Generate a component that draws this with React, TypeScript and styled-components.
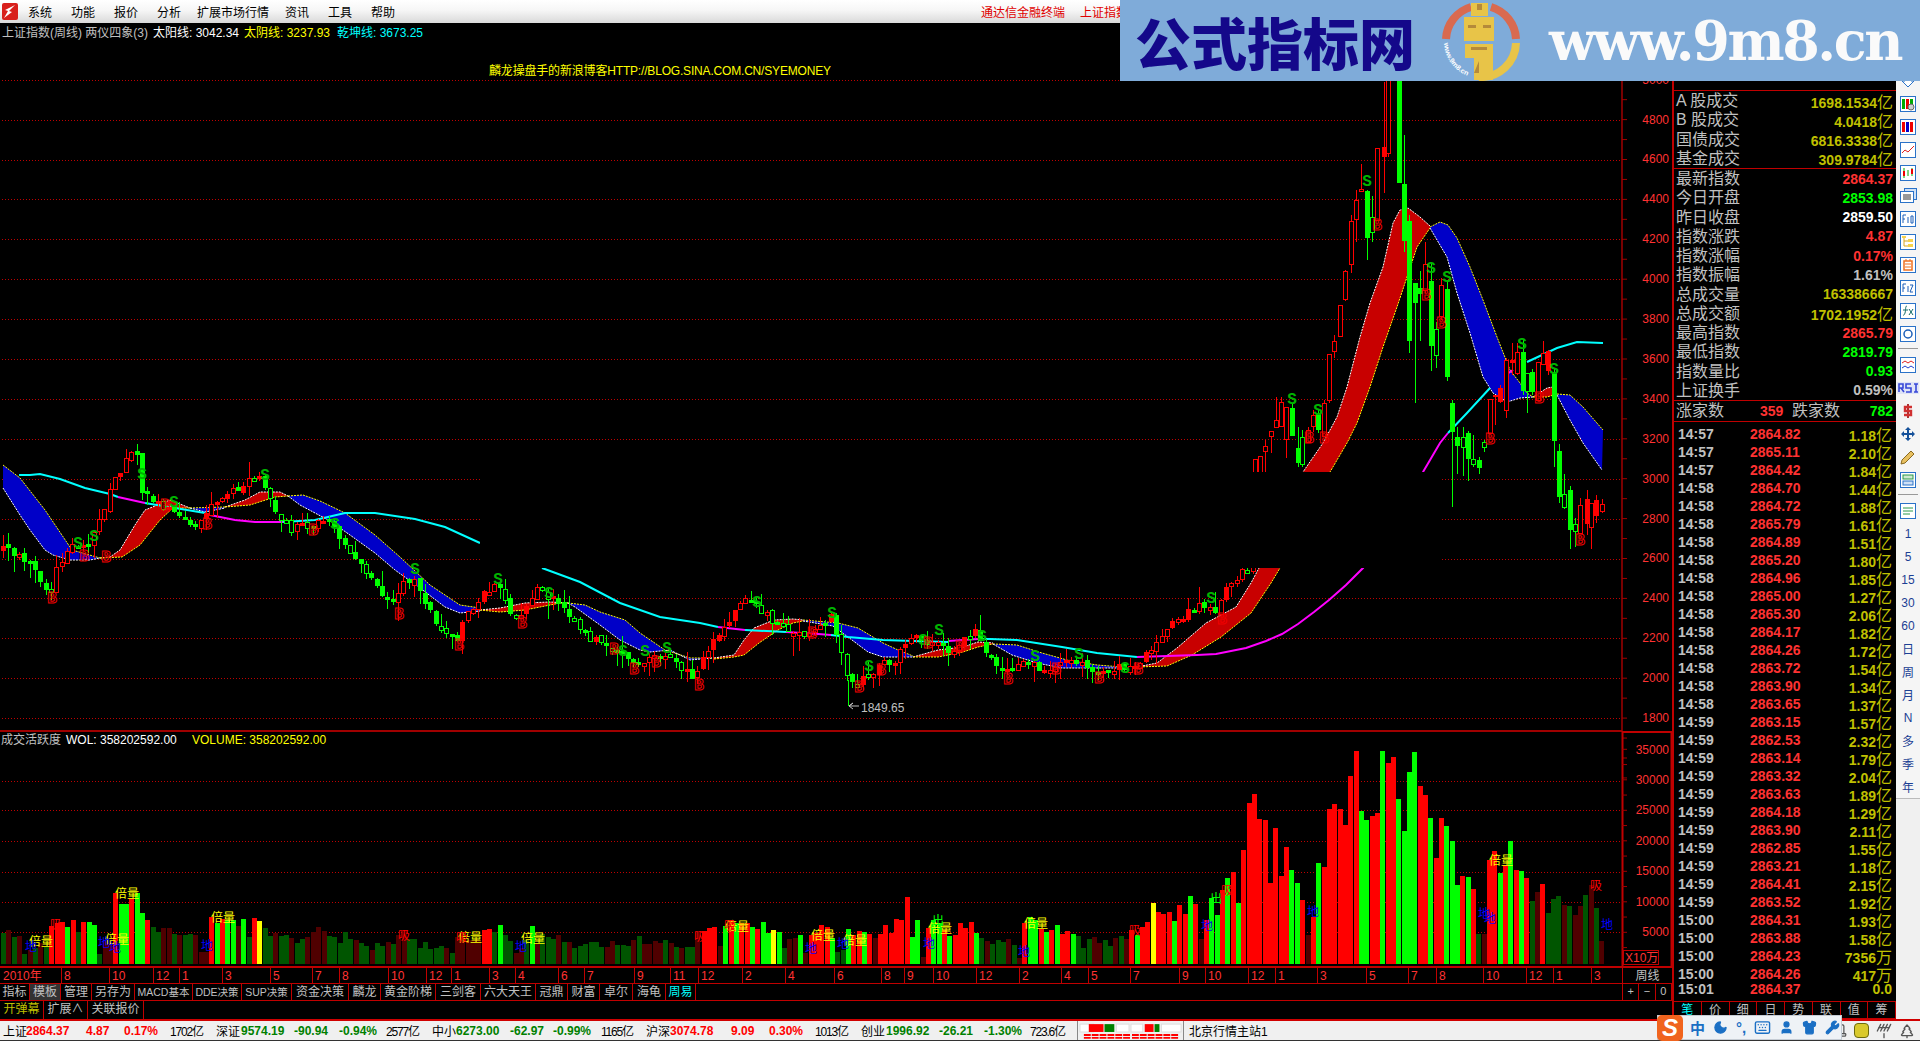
import { createGlobalStyle } from "styled-components";
import styled from "styled-components";
import { Moon, Keyboard, Shirt, Wrench, User, ScrollText, Antenna, TreePine } from "lucide-react";

const FONT = `"Liberation Sans", "Noto Sans CJK SC", sans-serif`;
const RED = "#ff3232";
const LINE = "#c00000";
const OLIVE = "#c0c000";
const GREY = "#c0c0c0";

const GlobalStyle = createGlobalStyle`
    html, body { margin: 0; padding: 0; background: #000; overflow: hidden; }
    * { box-sizing: border-box; }
`;

const Page = styled.div`
    position: relative;
    width: 1920px;
    height: 1041px;
    display: flex;
    flex-direction: column;
    background: #000;
    font-family: ${FONT};
    font-size: 12px;
    overflow: hidden;
`;

/* ---------- menu ---------- */

const MenuBar = styled.div`
    height: 23px;
    display: flex;
    align-items: center;
    background: linear-gradient(#ffffff, #f6f6f6 45%, #d9d9d9);
    color: #000;
`;

const AppLogo = styled.svg`
    width: 16px;
    height: 17px;
    margin: 0 10px 0 2px;
`;

const MenuItem = styled.div<{ $w: number }>`
    width: ${(p) => p.$w}px;
    white-space: nowrap;
`;

const MenuNote = styled.div<{ $left: number }>`
    margin-left: ${(p) => p.$left}px;
    color: #e00000;
    white-space: nowrap;
`;

/* ---------- layout ---------- */

const Main = styled.div`
    display: flex;
    height: 996px;
`;

const LeftCol = styled.div`
    width: 1672px;
    display: flex;
    flex-direction: column;
`;

const ChartSvg = styled.svg`
    display: block;
    width: 1672px;
    height: 945px;
`;

const BottomRow = styled.div`
    display: flex;
    flex: 1;
`;

const BottomLeft = styled.div`
    width: 1622px;
    display: flex;
    flex-direction: column;
`;

const TimeAxis = styled.svg`
    display: block;
    width: 1622px;
    height: 15px;
    flex: none;
`;

const TabRow = styled.div<{ $h: number }>`
    display: flex;
    height: ${(p) => p.$h}px;
    border-top: 1px solid ${LINE};
`;

const Tab = styled.div<{ $w: number; $c?: string; $active?: boolean; $small?: boolean }>`
    width: ${(p) => p.$w}px;
    border-right: 1px solid ${LINE};
    color: ${(p) => p.$c || GREY};
    background: ${(p) => (p.$active ? "#333" : "transparent")};
    font-size: ${(p) => (p.$small ? "10.5px" : "12px")};
    text-align: center;
    line-height: 16px;
    white-space: nowrap;
    overflow: hidden;
`;

const AxisFoot = styled.div`
    width: 50px;
    display: flex;
    flex-direction: column;
    color: ${GREY};
`;

const CycleCell = styled.div`
    height: 16px;
    line-height: 16px;
    text-align: center;
    font-size: 12px;
    border-bottom: 1px solid ${LINE};
    border-left: 1px solid ${LINE};
`;

const ZoomRow = styled.div`
    display: flex;
    height: 17px;
    border-bottom: 1px solid ${LINE};
    border-left: 1px solid ${LINE};
`;

const ZoomCell = styled.div`
    flex: 1;
    text-align: center;
    line-height: 15px;
    font-size: 11px;
    border-right: 1px solid ${LINE};
`;

/* ---------- right panel ---------- */

const Panel = styled.div`
    width: 224px;
    display: flex;
    flex-direction: column;
    border-left: 2px solid ${LINE};
    color: ${GREY};
`;

const PanelHead = styled.div`
    height: 68px;
    display: flex;
    align-items: flex-end;
    gap: 3px;
    padding: 0 0 9px 2px;
    border-bottom: 1px solid ${LINE};
`;

const HeadBar = styled.div<{ $w: number }>`
    width: ${(p) => p.$w}px;
    height: 2px;
    background: #e05050;
`;

const Section = styled.div`
    border-bottom: 1px solid ${LINE};
`;

const StatRow = styled.div`
    height: 19.25px;
    display: flex;
    align-items: center;
    justify-content: space-between;
    padding: 0 3px 0 2px;
`;

const StatLabel = styled.span`
    font-size: 16px;
    line-height: 19px;
    white-space: nowrap;
`;

const StatValue = styled.span<{ $c: string }>`
    color: ${(p) => p.$c};
    font-size: 14px;
    font-weight: 700;
    white-space: nowrap;
`;

const Unit = styled.span`
    font-size: 16px;
    font-weight: 400;
`;

const BreadthRow = styled.div`
    height: 21px;
    display: grid;
    grid-template-columns: 84px 32px 1fr auto;
    align-items: center;
    padding: 0 3px 0 2px;
    border-bottom: 1px solid ${LINE};
`;

const TradeList = styled.div`
    height: 580px;
`;

const TradeRow = styled.div`
    height: 18px;
    display: grid;
    grid-template-columns: 72px 1fr auto;
    align-items: center;
    padding: 0 4px 0 4px;
    font-size: 14px;
    font-weight: 700;
    white-space: nowrap;
`;

const TradeTime = styled.span`
    color: ${GREY};
`;

const TradePrice = styled.span`
    color: ${RED};
`;

const TradeVol = styled.span`
    color: ${OLIVE};
`;

const PanelTabs = styled.div`
    display: flex;
    height: 18px;
    border-top: 1px solid ${LINE};
    border-bottom: 1px solid ${LINE};
`;

const PanelTab = styled.div<{ $on?: boolean }>`
    flex: 1;
    text-align: center;
    line-height: 16px;
    font-size: 12px;
    color: ${(p) => (p.$on ? "#00ffff" : GREY)};
    border-right: 1px solid ${LINE};
`;

/* ---------- toolbar ---------- */

const Toolbar = styled.div`
    width: 24px;
    background: #f0f0f0;
`;

const ToolList = styled.div`
    height: 776px;
    padding-top: 46px;
    display: flex;
    flex-direction: column;
    background: #f5f5f5;
    border-bottom: 1px solid #bbb;
`;

const ToolItem = styled.div`
    height: 23px;
    flex: none;
    display: flex;
    align-items: center;
    justify-content: center;
    color: #1c3f94;
    font-size: 12px;
`;

const ToolSep = styled.div`
    height: 8px;
    flex: none;
    margin: 0 2px;
    &::after {
        content: "";
        display: block;
        height: 1px;
        margin-top: 3px;
        background: #999;
    }
`;

/* ---------- status bar ---------- */

const StatusBar = styled.div`
    height: 22px;
    display: flex;
    align-items: center;
    padding-left: 3px;
    background: #f0f0f0;
    border-top: 2px solid #d00000;
    border-bottom: 1px solid #333;
    color: #000;
`;

const Quote = styled.span<{ $w: number; $c?: string; $thin?: boolean }>`
    width: ${(p) => p.$w}px;
    flex: none;
    color: ${(p) => p.$c || "#000"};
    font-weight: ${(p) => (p.$c ? 700 : 400)};
    letter-spacing: ${(p) => (p.$thin ? "-1.2px" : "0")};
    white-space: nowrap;
`;

const MiniGauge = styled.svg`
    width: 107px;
    height: 19px;
    flex: none;
    border-left: 1px solid #888;
    border-right: 1px solid #888;
`;

const Station = styled.span`
    margin-left: 5px;
    white-space: nowrap;
`;

const Tray = styled.div`
    margin-left: auto;
    display: flex;
    align-items: center;
    gap: 7px;
    padding-right: 5px;
    color: #555;
`;

const CoinDot = styled.div`
    width: 15px;
    height: 15px;
    border-radius: 4px;
    background: #d9c92c;
    border: 1px solid #6c6a10;
`;

/* ---------- overlays ---------- */

const Banner = styled.div`
    position: absolute;
    left: 1120px;
    top: 0;
    width: 800px;
    height: 81px;
    display: flex;
    align-items: center;
    background: #7fabd9;
`;

const BannerTitle = styled.div`
    width: 321px;
    padding-left: 15px;
    color: #14088a;
    font-family: "Noto Sans CJK SC", sans-serif;
    font-size: 56px;
    font-weight: 900;
    line-height: 81px;
    white-space: nowrap;
`;

const BannerLogo = styled.svg`
    width: 80px;
    height: 80px;
    flex: none;
`;

const BannerUrl = styled.div`
    margin-left: 28px;
    color: #fafafa;
    font-family: "DejaVu Serif", serif;
    font-size: 54px;
    font-weight: 700;
    letter-spacing: -2.4px;
    white-space: nowrap;
`;

const ImeBar = styled.div`
    position: absolute;
    left: 1657px;
    top: 1015px;
    width: 185px;
    height: 25px;
    display: flex;
    align-items: center;
    gap: 8px;
    padding-left: 32px;
    background: #eef2f6;
    border: 1px solid #c5ccd4;
    color: #1a6fc4;
`;

const ImeLogo = styled.div`
    position: absolute;
    left: -1px;
    top: -1px;
    width: 26px;
    height: 26px;
    border-radius: 5px;
    background: #f0641e;
    color: #fff;
    font-size: 24px;
    font-weight: 700;
    font-style: italic;
    line-height: 26px;
    text-align: center;
`;

const ImeText = styled.span`
    font-size: 15px;
    font-weight: 700;
`;

/* ---------- svg text ---------- */

const Legend = styled.text<{ $c: string }>`
    fill: ${(p) => p.$c};
    font-family: ${FONT};
    font-size: 12px;
`;

const AxisNum = styled.text`
    fill: ${RED};
    font-family: ${FONT};
    font-size: 12px;
    text-anchor: end;
`;

const TimeLabel = styled.text`
    fill: ${RED};
    font-family: ${FONT};
    font-size: 12px;
`;

const Signal = styled.text<{ $c: string }>`
    fill: ${(p) => (p.$c === "S" ? "#00b400" : "none")};
    stroke: ${(p) => (p.$c === "S" ? "none" : "#f00000")};
    stroke-width: 1;
    font-family: "Liberation Mono", monospace;
    font-size: 16px;
    font-weight: 700;
    text-anchor: middle;
`;

const VolTag = styled.text<{ $c: string }>`
    fill: ${(p) => p.$c};
    font-family: "Noto Sans CJK SC", sans-serif;
    font-size: 12px;
    text-anchor: middle;
`;

/* ---------- chart data ---------- */

type Pt = [number, number];

const pricePath: Pt[] = [
    [3, 550], [20, 555], [35, 570], [45, 585], [50, 592], [55, 565], [75, 545], [85, 550], [95, 530], [115, 480], [130, 450],
    [138, 460], [142, 490], [160, 505], [175, 508], [185, 520], [195, 530], [205, 515], [215, 500], [235, 490], [250, 478],
    [262, 472], [265, 490], [275, 510], [290, 530], [310, 525], [330, 520], [340, 543], [357, 563], [370, 575], [382, 598],
    [395, 600], [400, 590], [405, 577], [415, 583], [425, 600], [437, 625], [447, 635], [457, 640], [465, 615], [475, 610],
    [485, 590], [497, 585], [510, 615], [522, 617], [530, 597], [537, 590], [550, 597], [565, 613], [582, 630], [592, 638],
    [605, 648], [615, 648], [632, 665], [645, 663], [652, 655], [670, 660], [682, 668], [694, 680], [705, 653], [715, 637],
    [735, 613], [746, 593], [754, 603], [769, 617], [788, 630], [801, 637], [818, 623], [831, 617], [843, 653], [848, 683],
    [860, 680], [878, 667], [898, 657], [908, 637], [923, 640], [938, 643], [950, 653], [963, 640], [975, 630], [983, 650],
    [997, 668], [1007, 673], [1025, 660], [1037, 667], [1047, 673], [1067, 657], [1080, 663], [1090, 673], [1117, 667],
    [1137, 667], [1149, 653], [1157, 637], [1179, 617], [1201, 605], [1216, 610], [1226, 590], [1241, 573], [1255, 560],
];

// [zoomX, bodyTop, bodyBottom, high, low, kind] r solid red, R hollow red, g solid green, G hollow green
type Raw = [number, number, number, number, number, string];
const rightCandles: Raw[] = [
    [44, 1197, 1240, 1197, 1240, "R"], [60, 1187, 1240, 1187, 1240, "R"], [76, 1158, 1172, 1140, 1240, "R"], [92, 1112, 1126, 1112, 1178, "R"],
    [108, 1080, 1100, 1012, 1100, "R"], [124, 1027, 1100, 1010, 1100, "R"], [139, 1042, 1138, 1042, 1195, "R"], [157, 1044, 1128, 1030, 1128, "g"],
    [173, 1165, 1208, 1100, 1222, "g"], [187, 1132, 1213, 1110, 1222, "G"], [205, 1110, 1145, 1100, 1145, "R"], [220, 1066, 1100, 1050, 1115, "R"],
    [235, 1060, 1110, 1050, 1120, "g"], [252, 1030, 1130, 1020, 1130, "R"], [268, 883, 1020, 883, 1030, "R"], [283, 842, 872, 825, 895, "R"],
    [301, 736, 830, 736, 830, "R"], [316, 633, 718, 630, 722, "R"], [334, 484, 613, 465, 640, "R"], [349, 420, 476, 390, 545, "R"],
    [364, 388, 392, 313, 392, "R"], [382, 392, 533, 390, 600, "g"], [397, 472, 517, 408, 545, "G"], [412, 265, 480, 265, 480, "R"],
    [431, 262, 292, 65, 400, "r"], [445, 60, 278, 60, 290, "R"], [478, 60, 370, 60, 370, "g"], [493, 372, 543, 225, 575, "g"],
    [508, 484, 842, 465, 878, "g"], [526, 670, 730, 670, 1030, "g"], [541, 683, 703, 633, 843, "g"], [556, 613, 690, 545, 700, "R"],
    [574, 663, 857, 605, 932, "g"], [589, 808, 887, 785, 925, "G"], [604, 676, 770, 655, 780, "R"], [622, 687, 950, 660, 962, "g"],
    [637, 1030, 1115, 1020, 1342, "g"], [652, 1132, 1157, 1100, 1242, "g"], [669, 1132, 1162, 1100, 1247, "G"], [685, 1120, 1197, 1113, 1262, "g"],
    [700, 1198, 1212, 1125, 1222, "G"], [718, 1200, 1223, 1190, 1242, "g"], [733, 1145, 1160, 1140, 1175, "G"], [751, 1018, 1120, 1018, 1120, "R"],
    [766, 1005, 1012, 1005, 1095, "r"], [781, 985, 1025, 975, 1030, "r"], [799, 900, 1050, 895, 1073, "R"], [815, 900, 908, 850, 945, "r"],
    [830, 877, 940, 848, 945, "R"], [848, 877, 993, 840, 1005, "g"], [862, 940, 993, 940, 1060, "G"], [877, 937, 995, 928, 1005, "g"],
    [895, 907, 1020, 907, 1020, "R"], [910, 880, 912, 843, 915, "R"], [925, 872, 932, 870, 945, "r"], [943, 935, 1142, 925, 1220, "g"],
    [958, 1173, 1312, 1153, 1330, "g"], [973, 1303, 1343, 1243, 1347, "G"], [991, 1290, 1410, 1278, 1468, "g"], [1006, 1393, 1415, 1375, 1460, "G"],
    [1021, 1335, 1420, 1315, 1422, "R"], [1040, 1318, 1392, 1290, 1425, "r"], [1054, 1328, 1400, 1328, 1468, "R"], [1069, 1320, 1368, 1305, 1388, "r"],
    [1087, 1333, 1355, 1318, 1360, "R"],
];

type Band = { c: string; top: Pt[]; bot: Pt[] };
const BLUE = "#0000c8";
const CRIM = "#c80000";
const bands: Band[] = [
    { c: BLUE, top: [[3, 465], [20, 478], [45, 510], [72, 550], [100, 558]], bot: [[3, 488], [20, 515], [30, 530], [45, 550], [53, 555], [70, 560], [90, 560], [100, 558]] },
    { c: CRIM, top: [[100, 558], [110, 557], [120, 550], [135, 525], [145, 510], [170, 500], [190, 508]], bot: [[100, 558], [122, 557], [140, 545], [160, 520], [173, 508], [190, 508]] },
    { c: BLUE, top: [[190, 508], [225, 507]], bot: [[190, 508], [205, 512], [225, 508]] },
    { c: CRIM, top: [[225, 507], [245, 500], [260, 492], [280, 492], [288, 496]], bot: [[225, 507], [250, 505], [275, 497], [288, 496]] },
    { c: BLUE, top: [[288, 496], [303, 495], [320, 501], [345, 513], [375, 535], [400, 557], [430, 585], [460, 605], [480, 608]], bot: [[288, 496], [300, 505], [315, 513], [330, 521], [350, 535], [375, 553], [395, 570], [420, 588], [445, 607], [460, 613], [480, 611]] },
    { c: CRIM, top: [[480, 610], [500, 608], [525, 603], [550, 602], [568, 603]], bot: [[480, 610], [500, 612], [525, 610], [540, 607], [560, 603], [568, 603]] },
    { c: BLUE, top: [[568, 603], [585, 605], [600, 612], [625, 620], [640, 633], [665, 650], [690, 658], [712, 658]], bot: [[568, 603], [575, 607], [600, 625], [620, 640], [640, 650], [650, 652], [670, 650], [690, 660], [712, 658]] },
    { c: CRIM, top: [[714, 658], [734, 655], [744, 640], [754, 628], [774, 620], [793, 619], [803, 620]], bot: [[714, 659], [734, 657], [744, 655], [759, 643], [778, 630], [793, 623], [803, 621]] },
    { c: BLUE, top: [[803, 620], [838, 623], [858, 628], [883, 643], [898, 650], [913, 656]], bot: [[803, 621], [833, 626], [848, 637], [868, 652], [883, 657], [898, 657], [913, 657]] },
    { c: CRIM, top: [[913, 657], [938, 650], [963, 647], [978, 642], [993, 643]], bot: [[913, 657], [938, 657], [963, 652], [978, 647], [993, 644]] },
    { c: BLUE, top: [[993, 644], [1017, 645], [1042, 653], [1067, 660], [1097, 665], [1122, 667]], bot: [[993, 644], [1012, 655], [1037, 663], [1062, 668], [1082, 668], [1122, 668]] },
    {
        c: CRIM,
        top: [[1137, 667], [1157, 663], [1177, 648], [1206, 623], [1236, 607], [1251, 583], [1259, 568], [1303, 472], [1323, 443], [1337, 417], [1347, 387], [1360, 337], [1370, 303], [1383, 267], [1393, 223], [1400, 210], [1408, 208], [1420, 217], [1430, 226]],
        bot: [[1137, 667], [1167, 666], [1192, 655], [1221, 637], [1251, 613], [1271, 583], [1280, 568], [1330, 472], [1347, 443], [1357, 423], [1370, 387], [1383, 347], [1397, 307], [1407, 277], [1417, 247], [1430, 228]],
    },
    { c: BLUE, top: [[1430, 227], [1440, 222], [1448, 225], [1457, 238], [1470, 267], [1483, 300], [1497, 337], [1510, 370], [1520, 383], [1527, 393], [1533, 397]], bot: [[1430, 228], [1447, 257], [1457, 293], [1470, 333], [1483, 377], [1493, 393], [1507, 402], [1520, 398], [1533, 397]] },
    { c: CRIM, top: [[1533, 397], [1547, 388], [1553, 387], [1557, 393]], bot: [[1533, 397], [1547, 397], [1557, 394]] },
    { c: BLUE, top: [[1557, 394], [1570, 395], [1583, 407], [1603, 430]], bot: [[1557, 395], [1570, 420], [1583, 443], [1602, 470]] },
];

const CY = "#00ffff";
const MG = "#ff00ff";
const trendLines: { c: string; pts: Pt[] }[] = [
    { c: CY, pts: [[19, 475], [30, 475], [40, 474], [60, 479], [85, 488], [110, 494], [118, 497]] },
    { c: MG, pts: [[118, 497], [145, 503]] },
    { c: CY, pts: [[145, 503], [205, 513]] },
    { c: MG, pts: [[205, 514], [235, 520], [255, 522], [283, 522]] },
    { c: CY, pts: [[283, 522], [315, 520], [345, 513], [375, 513], [415, 519], [445, 527], [480, 543]] },
    { c: CY, pts: [[542, 568], [580, 582], [620, 603], [660, 617], [700, 623], [718, 627]] },
    { c: MG, pts: [[718, 627], [745, 630]] },
    { c: CY, pts: [[745, 630], [786, 632]] },
    { c: MG, pts: [[786, 632], [818, 634], [831, 635]] },
    { c: CY, pts: [[831, 635], [848, 637], [883, 640], [913, 641], [948, 642]] },
    { c: MG, pts: [[948, 641], [978, 639]] },
    { c: CY, pts: [[978, 639], [990, 639], [1017, 640], [1062, 647], [1097, 653], [1137, 657]] },
    { c: MG, pts: [[1137, 657], [1197, 655], [1216, 654], [1246, 648], [1266, 641], [1282, 634], [1298, 624], [1314, 612], [1329, 600], [1346, 585], [1363, 568], [1423, 472], [1440, 443], [1448, 433]] },
    { c: CY, pts: [[1448, 433], [1467, 413], [1490, 388]] },
    { c: MG, pts: [[1507, 374], [1513, 370]] },
    { c: CY, pts: [[1527, 362], [1557, 348], [1577, 342], [1603, 343]] },
];

const signalS: Pt[] = [
    [78, 542], [94, 535], [142, 473], [174, 501], [265, 474], [335, 523], [415, 568], [498, 578], [549, 592], [757, 601], [623, 650], [645, 650],
    [667, 647], [832, 612], [869, 665], [923, 639], [939, 629], [982, 635], [1035, 655], [1079, 653], [1125, 667], [1211, 597], [1292, 398],
    [1318, 409], [1367, 180], [1431, 267], [1447, 276], [1522, 343], [1554, 368],
];
const signalB: Pt[] = [
    [52, 597], [84, 555], [106, 556], [165, 504], [207, 523], [313, 529], [399, 613], [459, 644], [522, 622], [614, 648], [634, 668], [656, 661],
    [699, 684], [812, 632], [859, 686], [881, 669], [928, 642], [960, 646], [1008, 678], [1056, 668], [1099, 677], [1138, 668], [1222, 618],
    [1309, 437], [1324, 437], [1377, 224], [1426, 294], [1441, 322], [1490, 438], [1539, 397], [1580, 539],
];

const BAR_PITCH = 5.34;
const volumeRuns: { x: number; bars: string }[] = [
    {
        x: 1.1,
        bars: "G640 D630 G650 D648 G702 D690 G685 D670 G680 r618 r610 r607 g621 r600 G636 r606 g606 g615 G702 D660 D670 r518 g552 g552 r535 g519 g579 r600 G621 G636 D624 D625 G642 D644 G645 G642 D645 D695 D695 r591 g609 r597 g600 g600 D618 g597 G651 r594 y603 G624 G648 D639 G648 G645 D654 G669 G657 D651 D636 D621 D633 G648 G651 G669 G636 G657 D660 G669 G678 D690 G669 G678 D666 G672 D645 D630 G657 G657 G684 G666 G687 G684 G678 D684 G699 D652 D637 D660 D660 D660 r630 r627 G636 g615 G645 G663 D699 D684 G660 g618 D672 G642 G652 G657 D645 G666 D666 G684 G678 G672 G666 G666 G681 D681 D663 G675 G675 G678 D660 G648 D672 D672 D663 D670 G660 D669 G681 D684 G681 G681 D636",
    },
    {
        x: 701.8,
        bars: "r633 r623 r621 D678 g618 r600 g610 r608 r608 g621 r627 g606 g640 y630 g636 G684 D657 D654 g645 D700 r645 r640 r615 r621 g654 G696 G690 g627 r645 r633 g636 r642 D654 r642 r615 r639 r597 r600 r531 g651 g600 D711 r624 g600 g610 r630 g648 r645 r609 r624 r606 g639 G654 D663 G672 G660 G666 D657",
    },
    {
        x: 1011.8,
        bars: "G675 D715 r609 g590 g600 r628 g636 r630 g615 r642 r633 g642 G648 G684 G657 D651 D669 G660 G678 D654 G648 D657 r630 g645 r621 r606 y549 r576 r582 r576 g603 r555 r582 g528 r552 D657 r600 g534 g585 r510 g474 r456 g549 r390 r249 r222 r297 r300 r489 r324 r468 r381 g450 g489 r540 D645 r590 g429 r441 r267 r252 r267 r315 r168 r93 g273 g300 r288 r279 g93 r129 r111 g237 g333 g156 g96 r198 r225 g294 r414 r294 g318 g363 g495 r468 g471 r507 G642 D642 r420 r393 g459 r435 g363 r450 g453 r474 G543 D516 r492 G579 G537 G528 D555 G558 D585 D558 G525 D495 G564 D663",
    },
];

const BAR_COLOR: Record<string, string> = { r: "#ff0000", g: "#00ff00", y: "#ffff00", G: "#005500", D: "#500000" };

const volTags: { t: string; c: string; pts: Pt[] }[] = [
    { t: "倍量", c: "#ffff00", pts: [[41, 941], [117, 939], [127, 893], [223, 917], [470, 937], [533, 938], [737, 926], [823, 935], [855, 940], [940, 928], [1036, 923], [1501, 860]] },
    { t: "地", c: "#0000ff", pts: [[31, 946], [104, 942], [115, 947], [207, 945], [521, 946], [811, 948], [843, 943], [929, 943], [1024, 951], [1207, 925], [1313, 911], [1484, 913], [1490, 918], [1607, 924]] },
    { t: "吸", c: "#ff0000", pts: [[56, 924], [404, 935], [462, 937], [700, 936], [730, 925], [1135, 930], [1227, 890], [1596, 885]] },
    { t: "出", c: "#00ff00", pts: [[938, 920], [1216, 898]] },
];

const timeMarks: [number, string][] = [
    [62, "8"], [110, "10"], [154, "12"], [180, "1"], [223, "3"], [271, "5"], [313, "7"], [340, "8"], [389, "10"], [427, "12"], [452, "1"], [490, "3"], [516, "4"],
    [559, "6"], [585, "7"], [635, "9"], [671, "11"], [699, "12"], [743, "2"], [786, "4"], [835, "6"], [882, "8"], [905, "9"], [934, "10"], [977, "12"], [1020, "2"],
    [1062, "4"], [1089, "5"], [1131, "7"], [1180, "9"], [1206, "10"], [1249, "12"], [1276, "1"], [1318, "3"], [1367, "5"], [1409, "7"], [1437, "8"], [1484, "10"],
    [1527, "12"], [1554, "1"], [1592, "3"],
];

const priceY = (p: number) => 119.5 + (4800 - p) * 0.1995;

const lerp = (path: Pt[], x: number) => {
    for (let i = 1; i < path.length; i++) {
        if (x <= path[i][0]) {
            const [x0, y0] = path[i - 1];
            const [x1, y1] = path[i];
            return y0 + ((y1 - y0) * (x - x0)) / (x1 - x0);
        }
    }
    return path[path.length - 1][1];
};

type Candle = { x: number; top: number; bot: number; hi: number; lo: number; kind: string };

const buildCandles = (): Candle[] => {
    let seed = 4711;
    const rnd = () => {
        seed = (seed * 16807) % 2147483647;
        return seed / 2147483647;
    };
    const out: Candle[] = [];
    let prev = lerp(pricePath, 3);
    for (let x = 3; x < 1253; x += BAR_PITCH) {
        const close = lerp(pricePath, x) + (rnd() - 0.5) * 9;
        const open = prev + (rnd() - 0.5) * 4;
        const top = Math.min(open, close);
        const bot = Math.max(top + 3, Math.max(open, close));
        const up = open > close;
        const hollow = up ? rnd() < 0.62 : rnd() < 0.22;
        out.push({
            x,
            top,
            bot,
            hi: top - rnd() * rnd() * 18,
            lo: bot + rnd() * rnd() * 22,
            kind: up ? (hollow ? "R" : "r") : hollow ? "G" : "g",
        });
        prev = close;
    }
    rightCandles.forEach(([zx, t, b, h, l, kind]) => {
        out.push({ x: 1240 + zx / 3, top: 60 + t / 3, bot: 60 + b / 3, hi: 60 + h / 3, lo: 60 + l / 3, kind });
    });
    return out;
};

const candles = buildCandles();

const toPoints = (pts: Pt[]) => pts.map((p) => p.join(",")).join(" ");

const CandleMark = ({ c }: { c: Candle }) => {
    const color = c.kind === "r" || c.kind === "R" ? "#ff0000" : "#00ff00";
    const hollow = c.kind === "R" || c.kind === "G";
    const x = Math.round(c.x);
    return (
        <g shapeRendering="crispEdges">
            <line x1={x + 0.5} x2={x + 0.5} y1={c.hi} y2={c.lo} stroke={color} />
            {hollow ? (
                <rect x={x - 2 + 0.5} y={Math.round(c.top) + 0.5} width={4} height={Math.max(2, Math.round(c.bot - c.top))} fill="#000" stroke={color} />
            ) : (
                <rect x={x - 2} y={c.top} width={5} height={Math.max(2, c.bot - c.top)} fill={color} />
            )}
        </g>
    );
};

const GridLine = ({ y }: { y: number }) => (
    <line x1={2} x2={1622} y1={Math.round(y) + 0.5} y2={Math.round(y) + 0.5} stroke="#c00000" strokeDasharray="1 2" shapeRendering="crispEdges" />
);

const PriceChart = () => {
    const mainGrid = Array.from({ length: 17 }, (_, i) => 79.7 + i * 39.9);
    const volGrid = [780.7, 810.3, 841.3, 871.7, 902.3, 932.3];
    const axisPrices = Array.from({ length: 17 }, (_, i) => 5000 - i * 200);
    const volLabels = [35000, 30000, 25000, 20000, 15000, 10000, 5000];
    return (
        <ChartSvg viewBox="0 23 1672 945">
            {mainGrid.map((y) => (
                <GridLine key={y} y={y} />
            ))}
            {volGrid.map((y) => (
                <GridLine key={y} y={y} />
            ))}

            {bands.map((b, i) => (
                <g key={i}>
                    <polygon points={toPoints([...b.top, ...[...b.bot].reverse()])} fill={b.c} />
                    <polyline points={toPoints(b.top)} fill="none" stroke={b.c === BLUE ? "#ffff00" : "#ffffff"} strokeDasharray="2 1" />
                    <polyline points={toPoints(b.bot)} fill="none" stroke={b.c === BLUE ? "#ffffff" : "#ffff00"} strokeDasharray="2 1" />
                </g>
            ))}
            {trendLines.map((l, i) => (
                <polyline key={i} points={toPoints(l.pts)} fill="none" stroke={l.c} strokeWidth={2} />
            ))}
            {candles.map((c, i) => (
                <CandleMark key={i} c={c} />
            ))}
            {signalS.map(([x, y]) => (
                <Signal key={`s${x}`} $c="S" x={x} y={y + 6}>
                    S
                </Signal>
            ))}
            {signalB.map(([x, y]) => (
                <Signal key={`b${x}`} $c="B" x={x} y={y + 6}>
                    B
                </Signal>
            ))}

            {/* the black patch the terminal leaves over the middle of the chart */}
            <rect x={480} y={472} width={962} height={96} fill="#000" />

            <line x1={848.5} x2={848.5} y1={680} y2={706} stroke="#00ff00" />
            <polyline points="859,706 849,706 853,703 849,706 853,709" fill="none" stroke={GREY} />
            <Legend $c={GREY} x={861} y={712}>
                1849.65
            </Legend>

            <Legend $c={GREY} x={2} y={37}>
                上证指数(周线) 两仪四象(3)
            </Legend>
            <Legend $c="#ffffff" x={153} y={37}>
                太阳线: 3042.34
            </Legend>
            <Legend $c="#ffff00" x={244} y={37}>
                太阴线: 3237.93
            </Legend>
            <Legend $c="#00ffff" x={337} y={37}>
                乾坤线: 3673.25
            </Legend>
            <Legend $c="#ffff00" x={489} y={75} textLength={342} lengthAdjust="spacing">
                麟龙操盘手的新浪博客HTTP://BLOG.SINA.COM.CN/SYEMONEY
            </Legend>
            <Legend $c={GREY} x={1} y={744}>
                成交活跃度
            </Legend>
            <Legend $c="#ffffff" x={66} y={744}>
                WOL: 358202592.00
            </Legend>
            <Legend $c="#ffff00" x={192} y={744}>
                VOLUME: 358202592.00
            </Legend>

            <line x1={0} x2={1622} y1={731} y2={731} stroke="#a00000" strokeWidth={2} />
            {volumeRuns.map((run) =>
                run.bars.split(" ").map((b, i) => {
                    const top = 720 + Number(b.slice(1)) / 3;
                    return <rect key={`${run.x}-${i}`} x={run.x + i * BAR_PITCH} y={top} width={5} height={964 - top} fill={BAR_COLOR[b[0]]} shapeRendering="crispEdges" />;
                }),
            )}
            {volTags.map((g) =>
                g.pts.map(([x, y]) => (
                    <VolTag key={`${g.t}${x}`} $c={g.c} x={x} y={y + 5}>
                        {g.t}
                    </VolTag>
                )),
            )}
            <line x1={0} x2={1622} y1={967} y2={967} stroke={LINE} strokeWidth={2} />

            <line x1={1622} x2={1622} y1={23} y2={731} stroke="#a00000" strokeWidth={1.5} />
            {Array.from({ length: 36 }, (_, i) => 79.7 + i * 19.95).map((y) => (
                <line key={y} x1={1622} x2={1627} y1={y} y2={y} stroke="#a00000" />
            ))}
            {axisPrices.map((p) => (
                <AxisNum key={p} x={1669} y={priceY(p) + 4}>
                    {p}
                </AxisNum>
            ))}
            <rect x={1622.5} y={732} width={49} height={235} fill="none" stroke={LINE} strokeWidth={2} />
            {volLabels.map((v, i) => (
                <AxisNum key={v} x={1669} y={753.5 + i * 30.45}>
                    {v}
                </AxisNum>
            ))}
            {Array.from({ length: 14 }, (_, i) => 749.3 + i * 15.25).map((y) => (
                <line key={y} x1={1622} x2={1627} y1={y} y2={y} stroke="#a00000" />
            ))}
            <rect x={1623.5} y={950.5} width={35} height={14} fill="#000" stroke={LINE} />
            <Legend $c={RED} x={1625} y={962}>
                X10万
            </Legend>
        </ChartSvg>
    );
};

/* ---------- panel data ---------- */

const turnover = [
    ["A 股成交", "1698.1534", "亿"],
    ["B 股成交", "4.0418", "亿"],
    ["国债成交", "6816.3338", "亿"],
    ["基金成交", "309.9784", "亿"],
];

const indexStats: [string, string, string, string?][] = [
    ["最新指数", "2864.37", RED],
    ["今日开盘", "2853.98", "#00ff00"],
    ["昨日收盘", "2859.50", "#ffffff"],
    ["指数涨跌", "4.87", RED],
    ["指数涨幅", "0.17%", RED],
    ["指数振幅", "1.61%", GREY],
    ["总成交量", "163386667", OLIVE],
    ["总成交额", "1702.1952", OLIVE, "亿"],
    ["最高指数", "2865.79", RED],
    ["最低指数", "2819.79", "#00ff00"],
    ["指数量比", "0.93", "#00ff00"],
    ["上证换手", "0.59%", GREY],
];

const trades = `14:57 2864.82 1.18亿|14:57 2865.11 2.10亿|14:57 2864.42 1.84亿|14:58 2864.70 1.44亿|14:58 2864.72 1.88亿|14:58 2865.79 1.61亿|14:58 2864.89 1.51亿|14:58 2865.20 1.80亿|14:58 2864.96 1.85亿|14:58 2865.00 1.27亿|14:58 2865.30 2.06亿|14:58 2864.17 1.82亿|14:58 2864.26 1.72亿|14:58 2863.72 1.54亿|14:58 2863.90 1.34亿|14:58 2863.65 1.37亿|14:59 2863.15 1.57亿|14:59 2862.53 2.32亿|14:59 2863.14 1.79亿|14:59 2863.32 2.04亿|14:59 2863.63 1.89亿|14:59 2864.18 1.29亿|14:59 2863.90 2.11亿|14:59 2862.85 1.55亿|14:59 2863.21 1.18亿|14:59 2864.41 2.15亿|14:59 2863.52 1.92亿|15:00 2864.31 1.93亿|15:00 2863.88 1.58亿|15:00 2864.23 7356万|15:00 2864.26 417万|15:01 2864.37 0.0`
    .split("|")
    .map((r) => r.split(" "));

const splitUnit = (v: string) => {
    const last = v[v.length - 1];
    return last === "亿" || last === "万" ? [v.slice(0, -1), last] : [v, ""];
};

const bottomTabs: [string, number, string?, boolean?, boolean?][] = [
    ["指标", 30], ["模板", 31, undefined, true], ["管理", 31], ["另存为", 43], ["MACD基本", 58, undefined, false, true], ["DDE决策", 49, undefined, false, true],
    ["SUP决策", 50, undefined, false, true], ["资金决策", 57], ["麟龙", 32], ["黄金阶梯", 55], ["三剑客", 45], ["六大天王", 55], ["冠鼎", 32], ["财富", 32], ["卓尔", 33],
    ["海龟", 33], ["周易", 30, "#00ffff"],
];

const S_RED = "#ff0000";
const S_GREEN = "#008000";
const quotes: [string, number, string?, boolean?][] = [
    ["上证", 23], ["2864.37", 60, S_RED], ["4.87", 38, S_RED], ["0.17%", 46, S_RED], ["1702亿", 46, undefined, true],
    ["深证", 25], ["9574.19", 53, S_GREEN], ["-90.94", 45, S_GREEN], ["-0.94%", 47, S_GREEN], ["2577亿", 46, undefined, true],
    ["中小", 24], ["6273.00", 54, S_GREEN], ["-62.97", 43, S_GREEN], ["-0.99%", 48, S_GREEN], ["1165亿", 45, undefined, true],
    ["沪深", 24], ["3074.78", 61, S_RED], ["9.09", 38, S_RED], ["0.30%", 46, S_RED], ["1013亿", 46, undefined, true],
    ["创业", 25], ["1996.92", 53, S_GREEN], ["-26.21", 45, S_GREEN], ["-1.30%", 46, S_GREEN], ["723.6亿", 47, undefined, true],
];

/* ---------- toolbar icons ---------- */

const Frame = ({ children }: { children: React.ReactNode }) => (
    <svg width="16" height="16" viewBox="0 0 16 16">
        <rect x="0.5" y="0.5" width="15" height="15" fill="#fff" stroke="#2a72c8" />
        {children}
    </svg>
);

const Bars = ({ colors }: { colors: string[] }) => (
    <>
        {colors.map((c, i) => (
            <rect key={i} x={2 + i * 4} y="3" width="3" height="10" fill={c} />
        ))}
    </>
);

const toolIcons: React.ReactNode[] = [
    <svg key="down" width="16" height="16" viewBox="0 0 16 16"><path d="M5 2h6v6h3l-6 6-6-6h3z" fill="#fff" stroke="#2a72c8" /></svg>,
    <Frame key="a"><Bars colors={["#0a0", "#e00", "#0a0"]} /><circle cx="11" cy="11" r="3" fill="#ccc" stroke="#666" /></Frame>,
    <Frame key="b"><Bars colors={["#e00", "#00c", "#e00"]} /></Frame>,
    <Frame key="c"><path d="M2 11l3-3 3 2 6-6" fill="none" stroke="#e02020" /></Frame>,
    <Frame key="d"><path d="M4 3v10M8 5v6M12 3v8" stroke="#0a0" /><rect x="3" y="6" width="2" height="5" fill="#e00" /><rect x="11" y="4" width="2" height="5" fill="#e00" /></Frame>,
    <svg key="e" width="17" height="16" viewBox="0 0 17 16"><rect x="4.5" y="0.5" width="12" height="11" fill="#cfe0f5" stroke="#2a72c8" /><rect x="0.5" y="3.5" width="13" height="11" fill="#fff" stroke="#2a72c8" /><path d="M3 7h8M3 9h8M3 11h8" stroke="#333" /></svg>,
    <Frame key="f"><path d="M3 4v8M3 4h3M3 8h2M8 6v6M13 5h-2v7h2z" fill="none" stroke="#1c5fb8" /></Frame>,
    <Frame key="g"><path d="M4 3v9h4M4 7h4" fill="none" stroke="#d9a520" /><rect x="8" y="5" width="5" height="3" fill="#f7d24a" /><rect x="8" y="10" width="5" height="3" fill="#f7d24a" /><rect x="2" y="2" width="4" height="2" fill="#f7d24a" /></Frame>,
    <Frame key="h"><rect x="4" y="4" width="8" height="9" fill="none" stroke="#f07020" strokeWidth="1.5" /><path d="M5 7h6M5 10h6M6 2v2M10 2v2" stroke="#f07020" /></Frame>,
    <Frame key="i"><path d="M3 4v8M3 4h3M3 8h2M8 6v6M10 5h3l-3 7h3" fill="none" stroke="#1c5fb8" /></Frame>,
    <Frame key="j"><path d="M7 3c-2 0-1 4-2 7s-2 2-2 2M3 7h5M9 6l4 6M13 6l-4 6" fill="none" stroke="#116a66" /></Frame>,
    <Frame key="k"><circle cx="8" cy="8" r="4" fill="none" stroke="#1c5fb8" strokeWidth="1.5" /></Frame>,
];

const toolIcons2: React.ReactNode[] = [
    <Frame key="l"><path d="M2 6l3-2 3 2 3-2 3 2" fill="none" stroke="#e02020" /><path d="M2 11l3-2 3 2 3-2 3 2" fill="none" stroke="#2040d0" /></Frame>,
    <svg key="rsi" width="22" height="12" viewBox="0 0 22 12"><rect width="22" height="12" fill="#dfe4f6" /><path d="M2 10V2h4v4H2M4 6l3 4M14 2H9v4h5v4H9M17 2h4M19 2v8M17 10h4" fill="none" stroke="#3848d8" strokeWidth="1.6" /></svg>,
    <svg key="dollar" width="16" height="16" viewBox="0 0 16 16"><rect x="7" y="1" width="2" height="14" fill="#a33" /><path d="M12 4H5v4h6v4H4" fill="none" stroke="#d03030" strokeWidth="2.4" /></svg>,
    <svg key="move" width="16" height="16" viewBox="0 0 16 16"><path d="M8 1l3 3H9v3h3V5l3 3-3 3V9H9v3h2l-3 3-3-3h2V9H4v2L1 8l3-3v2h3V4H5z" fill="#14509a" /></svg>,
    <svg key="pen" width="16" height="16" viewBox="0 0 16 16"><path d="M11 2l3 3-9 9-4 1 1-4z" fill="#e8c060" stroke="#8a6a20" /></svg>,
    <Frame key="p"><rect x="3" y="3" width="10" height="4" fill="#cfe8cf" stroke="#2a9a4a" /><rect x="3" y="9" width="10" height="4" fill="#cfe0f5" stroke="#2a72c8" /></Frame>,
];

const toolIcons3: React.ReactNode[] = [
    <Frame key="q"><path d="M3 5h10M3 8h10M3 11h7" stroke="#2a9a4a" /></Frame>,
];

const toolLabels = ["1", "5", "15", "30", "60", "日", "周", "月", "N", "多", "季", "年"];

const App = () => {
    return (
        <>
            <GlobalStyle />
            <Page>
                <MenuBar>
                    <AppLogo viewBox="0 0 16 17">
                        <rect width="16" height="17" rx="2" fill="#d8201c" />
                        <path d="M13 2L7 8l3 1-8 6 4-7-3-1z" fill="#fff" />
                    </AppLogo>
                    {[["系统", 43], ["功能", 43], ["报价", 43], ["分析", 40], ["扩展市场行情", 88], ["资讯", 43], ["工具", 43], ["帮助", 43]].map(([t, w]) => (
                        <MenuItem key={t} $w={Number(w)}>
                            {t}
                        </MenuItem>
                    ))}
                    <MenuNote $left={567}>通达信金融终端</MenuNote>
                    <MenuNote $left={15}>上证指数</MenuNote>
                </MenuBar>

                <Main>
                    <LeftCol>
                        <PriceChart />
                        <BottomRow>
                            <BottomLeft>
                                <TimeAxis viewBox="0 0 1622 15">
                                    <TimeLabel x={3} y={12}>
                                        2010年
                                    </TimeLabel>
                                    {timeMarks.map(([x, t]) => (
                                        <g key={x}>
                                            <line x1={x - 0.5} x2={x - 0.5} y1={0} y2={15} stroke={LINE} />
                                            <TimeLabel x={x + 2} y={12}>
                                                {t}
                                            </TimeLabel>
                                        </g>
                                    ))}
                                </TimeAxis>
                                <TabRow $h={17}>
                                    {bottomTabs.map(([t, w, c, on, small]) => (
                                        <Tab key={t} $w={w} $c={c} $active={on} $small={small}>
                                            {t}
                                        </Tab>
                                    ))}
                                </TabRow>
                                <TabRow $h={19}>
                                    <Tab $w={44} $c={OLIVE}>
                                        开弹幕
                                    </Tab>
                                    <Tab $w={44}>扩展∧</Tab>
                                    <Tab $w={56}>关联报价</Tab>
                                </TabRow>
                            </BottomLeft>
                            <AxisFoot>
                                <CycleCell>周线</CycleCell>
                                <ZoomRow>
                                    <ZoomCell>+</ZoomCell>
                                    <ZoomCell>−</ZoomCell>
                                    <ZoomCell>0</ZoomCell>
                                </ZoomRow>
                            </AxisFoot>
                        </BottomRow>
                    </LeftCol>

                    <Panel>
                        <PanelHead>
                            <HeadBar $w={58} />
                            <HeadBar $w={86} />
                        </PanelHead>
                        <Section>
                            {turnover.map(([label, value, unit]) => (
                                <StatRow key={label}>
                                    <StatLabel>{label}</StatLabel>
                                    <StatValue $c={OLIVE}>
                                        {value}
                                        <Unit>{unit}</Unit>
                                    </StatValue>
                                </StatRow>
                            ))}
                        </Section>
                        <Section>
                            {indexStats.map(([label, value, color, unit]) => (
                                <StatRow key={label}>
                                    <StatLabel>{label}</StatLabel>
                                    <StatValue $c={color}>
                                        {value}
                                        {unit && <Unit>{unit}</Unit>}
                                    </StatValue>
                                </StatRow>
                            ))}
                        </Section>
                        <BreadthRow>
                            <StatLabel>涨家数</StatLabel>
                            <StatValue $c={RED}>359</StatValue>
                            <StatLabel>跌家数</StatLabel>
                            <StatValue $c="#00ff00">782</StatValue>
                        </BreadthRow>
                        <TradeList>
                            {trades.map(([time, price, vol], i) => {
                                const [num, unit] = splitUnit(vol);
                                return (
                                    <TradeRow key={i}>
                                        <TradeTime>{time}</TradeTime>
                                        <TradePrice>{price}</TradePrice>
                                        <TradeVol>
                                            {num}
                                            {unit && <Unit>{unit}</Unit>}
                                        </TradeVol>
                                    </TradeRow>
                                );
                            })}
                        </TradeList>
                        <PanelTabs>
                            {["笔", "价", "细", "日", "势", "联", "值", "筹"].map((t, i) => (
                                <PanelTab key={t} $on={i === 0}>
                                    {t}
                                </PanelTab>
                            ))}
                        </PanelTabs>
                    </Panel>

                    <Toolbar>
                        <ToolList>
                            {toolIcons.map((icon, i) => (
                                <ToolItem key={i}>{icon}</ToolItem>
                            ))}
                            <ToolSep />
                            {toolIcons2.map((icon, i) => (
                                <ToolItem key={i}>{icon}</ToolItem>
                            ))}
                            <ToolSep />
                            {toolIcons3.map((icon, i) => (
                                <ToolItem key={i}>{icon}</ToolItem>
                            ))}
                            {toolLabels.map((t) => (
                                <ToolItem key={t}>{t}</ToolItem>
                            ))}
                        </ToolList>
                    </Toolbar>
                </Main>

                <StatusBar>
                    {quotes.map(([t, w, c, thin], i) => (
                        <Quote key={i} $w={w} $c={c} $thin={thin}>
                            {t}
                        </Quote>
                    ))}
                    <MiniGauge viewBox="0 0 107 19">
                        <rect x="2" y="3" width="14" height="8" fill="#fff" stroke="#ddd" />
                        <rect x="11" y="3" width="15" height="8" fill="#f00" />
                        <rect x="27" y="3" width="10" height="8" fill="#008000" />
                        <rect x="39" y="3" width="13" height="8" fill="#fff" stroke="#ddd" />
                        <rect x="54" y="3" width="12" height="8" fill="#fff" stroke="#ddd" />
                        <rect x="68" y="3" width="9" height="8" fill="#f00" />
                        <rect x="78" y="3" width="5" height="8" fill="#008000" />
                        <rect x="85" y="3" width="20" height="8" fill="#fff" stroke="#ddd" />
                        <path d="M6 14h47M6 17h47M55 14h47M55 17h47" stroke="#f00" strokeWidth="2" strokeDasharray="7 1" />
                    </MiniGauge>
                    <Station>北京行情主站1</Station>
                    <Tray>
                        <ScrollText size={15} />
                        <CoinDot />
                        <Antenna size={16} />
                        <TreePine size={16} />
                    </Tray>
                </StatusBar>

                <Banner>
                    <BannerTitle>公式指标网</BannerTitle>
                    <BannerLogo viewBox="0 0 80 80">
                        <path id="ring-text" d="M3 42A37 37 0 0 0 30 76" fill="none" />
                        <path d="M5 38A35 35 0 0 1 30 6" fill="none" stroke="#d96a50" strokeWidth="8" />
                        <path d="M50 6A35 35 0 0 1 75 38" fill="none" stroke="#d96a50" strokeWidth="8" />
                        <path d="M75 42A35 35 0 0 1 38 76" fill="none" stroke="#e8c448" strokeWidth="8" />
                        <path d="M30 2h17v13H30zM23 16h30v24H23zM24 43h28v14H24zM33 57h19v22H33z" fill="#e8c448" />
                        <path d="M36 3h5v6h-5zM27 24h8v3h-8zM42 24h8v3h-8zM30 46h16v3H30zM38 60l-5 12h5z" fill="#b58a3a" />
                        <text fontFamily="Liberation Sans" fontSize="7" fontWeight="700" fill="#fff">
                            <textPath href="#ring-text">www.9m8.cn</textPath>
                        </text>
                    </BannerLogo>
                    <BannerUrl>www.9m8.cn</BannerUrl>
                </Banner>

                <ImeBar>
                    <ImeLogo>S</ImeLogo>
                    <ImeText>中</ImeText>
                    <Moon size={15} fill="#1a6fc4" />
                    <ImeText>°,</ImeText>
                    <Keyboard size={17} />
                    <User size={15} fill="#1a6fc4" />
                    <Shirt size={15} fill="#1a6fc4" />
                    <Wrench size={15} fill="#1a6fc4" />
                </ImeBar>
            </Page>
        </>
    );
};

export default App;
